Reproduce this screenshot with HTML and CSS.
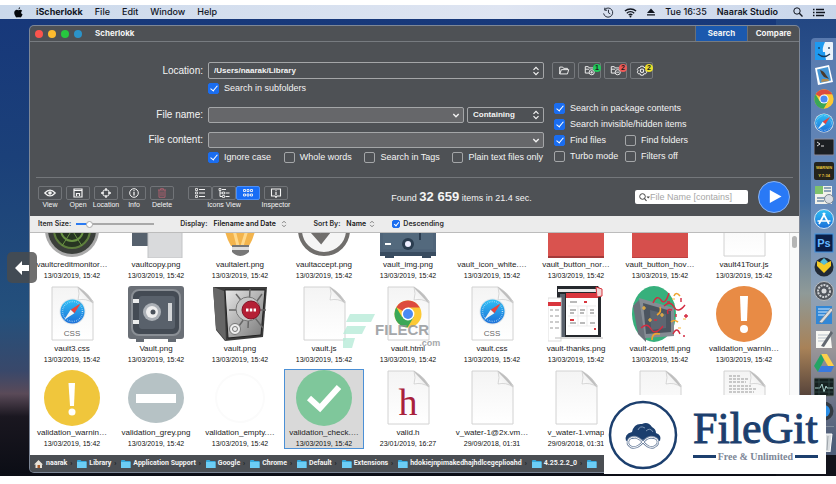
FILE: index.html
```html
<!DOCTYPE html>
<html lang="en">
<head>
<meta charset="utf-8">
<title>Scherlokk</title>
<link rel="stylesheet" href="styles.css">
</head>
<body>
<svg class="defs" aria-hidden="true">
  <defs>
    <linearGradient id="paper" x1="0" y1="0" x2="0" y2="1"><stop offset="0" stop-color="#f4f4f4"/><stop offset="1" stop-color="#fff"/></linearGradient>
    <linearGradient id="fold" x1="0" y1="1" x2="1" y2="0"><stop offset="0" stop-color="#fff"/><stop offset=".45" stop-color="#f2f2f2"/><stop offset=".5" stop-color="#bbb"/><stop offset="1" stop-color="#eee"/></linearGradient>
    <linearGradient id="steel" x1="0" y1="0" x2="1" y2="1"><stop offset="0" stop-color="#e8e8e8"/><stop offset="1" stop-color="#777"/></linearGradient>
    <linearGradient id="sky" x1="0" y1="0" x2="0" y2="1"><stop offset="0" stop-color="#2fc0f5"/><stop offset="1" stop-color="#1c6fd8"/></linearGradient>
  </defs>
  <symbol id="doc" viewBox="0 0 56 56"><path d="M8 1H34L49 15V54H8Z" fill="url(#paper)" stroke="#d2d2d2"/><path d="M34 1Q36 8 34 14Q42 12 49 17Q46 8 34 1Z" fill="url(#fold)" stroke="#c8c8c8" stroke-width=".7"/></symbol>
  <symbol id="compass" viewBox="0 0 26 26"><circle cx="13" cy="13" r="12.5" fill="#dfe5ea"/><circle cx="13" cy="13" r="11.6" fill="url(#sky)"/><circle cx="13" cy="13" r="9.6" fill="none" stroke="#bfe2fa" stroke-width="1.4" stroke-dasharray=".5 1.3"/><path d="M21 5L14.8 14.6L11.2 11.4Z" fill="#e8443c"/><path d="M5 21L11.2 11.4L14.8 14.6Z" fill="#f4f4f4"/></symbol>
  <symbol id="chrome" viewBox="0 0 28 28"><circle cx="14" cy="14" r="13.5" fill="#fcc934"/><path d="M14 14L2.3 7.2A13.5 13.5 0 0 1 25.700 7.500H14Z" fill="#dd4b3e"/><path d="M2.300 7.200A13.500 13.500 0 0 0 13.500 27.500L19.600 17.200L14 14L8 17Z" fill="#3aa757"/><circle cx="14" cy="14" r="6.400" fill="#fff"/><circle cx="14" cy="14" r="5" fill="#4a8af4"/></symbol>
  <symbol id="folder" viewBox="0 0 10 8"><path d="M0 1Q0 0 1 0H3.500L4.500 1H9.500V8H0Z" fill="#36a9dc"/><path d="M0 2H9.500V8H0Z" fill="#6ccdf5"/></symbol>
  <symbol id="updown" viewBox="0 0 8 10"><path d="M1.500 3.800L4 1.300L6.500 3.800M1.500 6.200L4 8.700L6.500 6.200" fill="none" stroke="currentColor" stroke-width="1.200"/></symbol>
  <symbol id="down" viewBox="0 0 8 10"><path d="M1.300 4L4 6.700L6.700 4" fill="none" stroke="currentColor" stroke-width="1.400"/></symbol>
  <symbol id="folderline" viewBox="0 0 14 12"><path d="M2 10V2H5.500L6.500 3.500H11V5M2 10L4 5H12.500L11 10Z" fill="none" stroke="currentColor" stroke-width="1.100"/></symbol>
</svg>

<header class="menubar">
  <nav class="menus" aria-label="Application menu">
    <svg class="apple" viewBox="0 0 10 12"><path d="M6.800 0Q7 1.800 5 2.700Q4.800 .8 6.800 0ZM5 3.500Q7.500 2.200 9 4Q6.500 6 9.500 8.300Q8 12 6.300 11.300Q5 10.800 3.800 11.300Q2 12 .7 8.300Q-.5 4.200 2.200 3.200Q3.500 2.900 5 3.500Z" fill="#05080c"/></svg>
    <a class="app" href="#">iScherlokk</a><a href="#">File</a><a href="#">Edit</a><a href="#">Window</a><a href="#">Help</a>
  </nav>
  <div class="status">
    <svg class="s12" viewBox="0 0 12 12"><path d="M2.200 3A5 5 0 1 1 1.200 7M2.500 .8V3.500H5M6.500 3V6.300L8.500 7.500" fill="none" stroke="#1a2230"/></svg>
    <svg class="s13" viewBox="0 0 14 11"><path d="M1 4A9 9 0 0 1 13 4M3 6.200A6 6 0 0 1 11 6.200M5 8.300A3 3 0 0 1 9 8.300" fill="none" stroke="#10151f" stroke-width="1.400"/><circle cx="7" cy="9.800" r="1" fill="#10151f"/></svg>
    <svg class="s8" viewBox="0 0 8 8"><path d="M0 5L4 .5L8 5ZM0 6.200H8V7.500H0Z" fill="#10151f"/></svg>
    <span>Tue 16:35</span><strong>Naarak Studio</strong>
    <svg class="s10" viewBox="0 0 10 10"><circle cx="4" cy="4" r="3.200" fill="none" stroke="#10151f"/><path d="M6.300 6.300L9.500 9.500" stroke="#10151f" stroke-width="1.300"/></svg>
    <svg class="s12" viewBox="0 0 12 8"><path d="M0 1H1.500M3 1H11M0 4H1.500M3 4H12M0 7H1.500M3 7H11" stroke="#10151f" stroke-width="1.300"/></svg>
  </div>
</header>

<main class="desktop">
  <section class="window">
    <div class="titlebar">
      <i class="dot red"></i><i class="dot yellow"></i><i class="dot green"></i><i class="dot blue"></i>
      <h1>Scherlokk</h1>
      <div class="tabs"><button class="on" type="button">Search</button><button type="button">Compare</button></div>
    </div>

    <form class="criteria">
      <label class="lbl r1" for="loc">Location:</label>
      <div class="field main r1"><select id="loc"><option>/Users/naarak/Library</option></select><svg class="arrow"><use href="#updown"/></svg></div>
      <div class="folders r1">
        <button type="button" aria-label="Choose folder"><svg class="fi" viewBox="0 0 14 12"><use href="#folderline"/></svg></button>
        <button type="button" aria-label="Included folders"><svg class="fi" viewBox="0 0 14 12"><path d="M6 9H1.500V1.500H5L6 3H11V4.500M1.500 4.500H6" fill="none" stroke="currentColor" stroke-width="1.100"/><circle cx="9" cy="8" r="3" fill="none" stroke="currentColor" stroke-width="1.100"/><path d="M9 6.300V9.700M7.300 8H10.700" stroke="currentColor"/></svg><b class="badge g">1</b></button>
        <button type="button" aria-label="Excluded folders"><svg class="fi" viewBox="0 0 14 12"><path d="M6 9H1.500V1.500H5L6 3H11V4.500M1.500 4.500H6" fill="none" stroke="currentColor" stroke-width="1.100"/><circle cx="9" cy="8" r="3" fill="none" stroke="currentColor" stroke-width="1.100"/><path d="M7.300 8H10.700" stroke="currentColor"/></svg><b class="badge r">2</b></button>
        <button type="button" aria-label="Filters"><svg class="fi" viewBox="0 0 14 12"><path d="M5.500 1H8.500L9.200 2.500L11 2.500L12.500 5L11.500 6.300L12.500 8L11 10L9.200 9.800L8.500 11.500H5.500L4.800 9.800L3 10L1.500 8L2.500 6.300L1.500 5L3 2.500L4.800 2.500Z" fill="none" stroke="currentColor" stroke-width="1.100"/><circle cx="7" cy="6.200" r="2" fill="none" stroke="currentColor" stroke-width="1.200"/></svg><b class="badge y">2</b></button>
      </div>
      <label class="check sub"><input type="checkbox" checked>Search in subfolders</label>

      <label class="lbl r3" for="fname">File name:</label>
      <div class="pair r3">
        <div class="field grey"><input id="fname" type="text"><svg class="arrow"><use href="#down"/></svg></div>
        <div class="field mode"><select aria-label="Match mode"><option>Containing</option></select><svg class="arrow"><use href="#updown"/></svg></div>
      </div>
      <label class="lbl r4" for="fcont">File content:</label>
      <div class="field grey main r4"><input id="fcont" type="text"><svg class="arrow"><use href="#down"/></svg></div>
      <div class="flags">
        <label class="check"><input type="checkbox" checked>Ignore case</label>
        <label class="check"><input type="checkbox">Whole words</label>
        <label class="check"><input type="checkbox">Search in Tags</label>
        <label class="check"><input type="checkbox">Plain text files only</label>
      </div>
      <div class="scope">
        <label class="check wide"><input type="checkbox" checked>Search in package contents</label>
        <label class="check wide"><input type="checkbox" checked>Search invisible/hidden items</label>
        <label class="check"><input type="checkbox" checked>Find files</label>
        <label class="check"><input type="checkbox">Find folders</label>
        <label class="check"><input type="checkbox">Turbo mode</label>
        <label class="check"><input type="checkbox">Filters off</label>
      </div>
    </form>

    <div class="toolbar">
      <div class="tools">
        <div class="tool"><button type="button" aria-labelledby="t1"><svg viewBox="0 0 12 10"><path d="M.8 5Q6 -.8 11.200 5Q6 10.800 .8 5Z" fill="none" stroke="currentColor" stroke-width="1.200"/><circle cx="6" cy="5" r="1.800" fill="currentColor"/></svg></button><span id="t1">View</span></div>
        <div class="tool"><button type="button" aria-labelledby="t2"><svg viewBox="0 0 12 10"><path d="M2 1H10V9H2ZM2 2.500H10" fill="none" stroke="currentColor" stroke-width="1.200"/><path d="M4.500 8V5.500H7.500V8" fill="none" stroke="currentColor" stroke-width="1.200"/></svg></button><span id="t2">Open</span></div>
        <div class="tool"><button type="button" aria-labelledby="t3"><svg viewBox="0 0 12 10"><circle cx="6" cy="5" r="3.400" fill="none" stroke="currentColor"/><path d="M6 0V3M6 7V10M1 5H4M8 5H11" stroke="currentColor" stroke-width="1.300"/></svg></button><span id="t3">Location</span></div>
        <div class="tool"><button type="button" aria-labelledby="t4"><svg viewBox="0 0 12 10"><circle cx="6" cy="5" r="4.300" fill="none" stroke="currentColor"/><path d="M6 4V7.500M6 2.200V3.300" stroke="currentColor" stroke-width="1.300"/></svg></button><span id="t4">Info</span></div>
        <div class="tool del"><button type="button" aria-labelledby="t5"><svg viewBox="0 0 12 10"><path d="M2 2H10M4.500 2V.7H7.500V2M3 2V9.300H9V2M5 3.500V8M7 3.500V8" fill="none" stroke="currentColor"/></svg></button><span id="t5">Delete</span></div>
        <div class="tool views">
          <div class="seg">
            <button type="button" aria-label="List"><svg viewBox="0 0 12 10"><path d="M5 1.500H11M5 5H11M5 8.500H11" stroke="currentColor"/><path d="M1.500 .5H3.500V2.500H1.500ZM1.500 4H3.500V6H1.500ZM1.500 7.500H3.500V9.500H1.500Z" fill="none" stroke="currentColor" stroke-width=".8"/></svg></button>
            <button type="button" aria-label="Tree"><svg viewBox="0 0 12 10"><path d="M4 1.500H8M7.500 5H11.500M7.500 8.500H11.500M2 2.500V8.500H4M2 5H4" fill="none" stroke="currentColor"/><path d="M1 .5H3V2.500H1ZM4.500 4H6.500V6H4.500ZM4.500 7.500H6.500V9.500H4.500Z" fill="none" stroke="currentColor" stroke-width=".8"/></svg></button>
            <button class="on" type="button" aria-label="Icons"><svg viewBox="0 0 12 10"><path d="M1.500 1.500H3.500V3.500H1.500ZM5 1.500H7V3.500H5ZM8.500 1.500H10.500V3.500H8.500ZM1.500 6H3.500V8H1.500ZM5 6H7V8H5ZM8.500 6H10.500V8H8.500Z" fill="none" stroke="currentColor" stroke-width=".9"/></svg></button>
          </div><span>Icons View</span></div>
        <div class="tool insp"><button type="button" aria-labelledby="t6"><svg viewBox="0 0 12 10"><path d="M1.500 1H10.500V8H7L6 9.500L5 8H1.500Z" fill="none" stroke="currentColor" stroke-width="1.100"/><path d="M6 4V7M6 2.200V3.200" stroke="currentColor" stroke-width="1.200"/></svg></button><span id="t6">Inspector</span></div>
      </div>
      <p class="found">Found <strong>32 659</strong> items in 21.4 sec.</p>
      <div class="run">
        <label class="search"><svg viewBox="0 0 12 10"><circle cx="4.500" cy="4.500" r="2.800" fill="none" stroke="#444"/><path d="M6.500 6.500L8.500 9" stroke="#444" stroke-width="1.200"/><path d="M8.500 4.500H12L10.200 6.500Z" fill="#444"/></svg><input type="text" placeholder="File Name [contains]" aria-label="Filter results"></label>
        <button class="play" type="button" aria-label="Start search"><svg viewBox="0 0 32 32"><path d="M11.500 8.500L24 15.500L11.500 22.500Z" fill="#fff"/></svg></button>
      </div>
    </div>

    <div class="options">
      <label for="size">Item Size:</label><input class="slider" id="size" type="range" min="0" max="100" value="14">
      <label class="odisp" for="disp">Display:</label><span class="pick p1"><select id="disp"><option>Filename and Date</option></select><svg class="arrow"><use href="#updown"/></svg></span>
      <label class="osort" for="sort">Sort By:</label><span class="pick p2"><select id="sort"><option>Name</option></select><svg class="arrow"><use href="#updown"/></svg></span>
      <label class="check small"><input type="checkbox" checked>Descending</label>
    </div>

    <div class="results">
      <div class="grid">
        <figure><svg viewBox="0 0 56 56"><circle cx="28" cy="28" r="27" fill="#aaa"/><circle cx="28" cy="28" r="24" fill="#3b3f3b"/><circle cx="28" cy="28" r="18" fill="#273522" stroke="#5d7d3c" stroke-width="2"/><circle cx="28" cy="28" r="11" fill="none" stroke="#6b9444" stroke-width="2"/><path d="M28 28L38 44M28 28L18 44" stroke="#6b9444"/></svg><figcaption>vaultcreditmonitor…<time>13/03/2019, 15:42</time></figcaption></figure>
        <figure><svg viewBox="0 0 56 56"><path d="M4 6H36V44H4Z" fill="#56616d"/><path d="M20 20H54V56H20Z" fill="#d9dadc" stroke="#c2c4c6"/></svg><figcaption>vaultcopy.png<time>13/03/2019, 15:42</time></figcaption></figure>
        <figure><svg viewBox="0 0 56 56"><path d="M12 20A16 16 0 0 1 44 20Q44 32 37 44H19Q12 32 12 20Z" fill="#f3b44c"/><path d="M26 44L22 28M30 44L35 28" stroke="#ffd88a" stroke-width="3"/><path d="M20 43H37V50Q28 58 20 50Z" fill="#777"/><path d="M20 45H37V48H20Z" fill="#ddd"/></svg><figcaption>vaultalert.png<time>13/03/2019, 15:42</time></figcaption></figure>
        <figure><svg viewBox="0 0 56 56"><circle cx="28" cy="28" r="24" fill="#f5f5f5" stroke="#706e6c" stroke-width="4"/><path d="M17 28L25 37L40 18" fill="none" stroke="#706e6c" stroke-width="7"/></svg><figcaption>vaultaccept.png<time>13/03/2019, 15:42</time></figcaption></figure>
        <figure><svg viewBox="0 0 56 56"><path d="M0 0H56V53H0Z" fill="#4f6479"/><path d="M3 3H53V47H3Z" fill="#53697d"/><path d="M0 50H56V54H0Z" fill="#394c60"/><path d="M5 54H14V56H5ZM42 54H51V56H42Z" fill="#394c60"/><circle cx="28" cy="42" r="6" fill="#2b3d50"/><circle cx="28" cy="42" r="3" fill="#eef"/><path d="M40 25V38" stroke="#2b3d50" stroke-width="2"/><path d="M5 42H11" stroke="#fff" stroke-width="2"/></svg><figcaption>vault_img.png<time>13/03/2019, 15:42</time></figcaption></figure>
        <figure><svg viewBox="0 0 56 56"></svg><figcaption>vault_icon_white.…<time>13/03/2019, 15:42</time></figcaption></figure>
        <figure><svg viewBox="0 0 56 56"><path d="M0 0H56V56H0Z" fill="#d9534f"/><path d="M0 54H56V56H0Z" fill="#a43a3a"/></svg><figcaption>vault_button_nor…<time>13/03/2019, 15:42</time></figcaption></figure>
        <figure><svg viewBox="0 0 56 56"><path d="M0 0H56V56H0Z" fill="#d64f4c"/><path d="M0 55H56V56H0Z" fill="#bd4141"/></svg><figcaption>vault_button_hov…<time>13/03/2019, 15:42</time></figcaption></figure>
        <figure><svg viewBox="0 0 56 56"><use href="#doc"/></svg><figcaption>vault41Tour.js<time>13/03/2019, 15:42</time></figcaption></figure>

        <figure><svg viewBox="0 0 56 56"><use href="#doc"/><use href="#compass" x="15" y="12" width="27" height="27"/><text class="ext" x="28" y="50">CSS</text></svg><figcaption>vault3.css<time>13/03/2019, 15:42</time></figcaption></figure>
        <figure><svg viewBox="0 0 56 56"><rect width="56" height="53" rx="3" fill="#6a6f76"/><rect x="4" y="4" width="48" height="45" rx="7" fill="#444b54" stroke="#8a8f95" stroke-width="2"/><rect x="11" y="10" width="36" height="33" rx="3" fill="#59616b"/><path d="M8 53H16V56H8ZM40 53H48V56H40Z" fill="#666c74"/><circle cx="24" cy="26" r="9" fill="#abb0b6"/><circle cx="24" cy="26" r="6" fill="#eee"/><circle cx="25" cy="26" r="2.500" fill="#4b525b"/><path d="M42 17V35" stroke="#d4d6d8" stroke-width="4"/><path d="M5 15H11M5 36H11" stroke="#eceded" stroke-width="4"/></svg><figcaption>Vault.png<time>13/03/2019, 15:42</time></figcaption></figure>
        <figure><svg viewBox="0 0 56 56"><path d="M1 1H55L51 51L13 55L4 44Z" fill="#3b3b3b"/><path d="M1 1L12 5L14 55L4 43Z" fill="#666"/><path d="M13 4H53L49 49L16 52Z" fill="url(#steel)" stroke="#222"/><path d="M38 3L36 42M17 24H54M24 8L51 42M50 8L27 40" stroke="#666" stroke-width="1.500"/><circle cx="36" cy="23" r="12" fill="#c7c7c7" stroke="#777"/><circle cx="39" cy="24" r="9" fill="#b51f35" stroke="#811326"/><path d="M34 24H44" stroke="#fff" stroke-width="3" stroke-dasharray="2.500 1.300"/><circle cx="23" cy="43" r="5.500" fill="#eee" stroke="#777"/><circle cx="23" cy="43" r="2.500" fill="none" stroke="#777"/></svg><figcaption>vault.png<time>13/03/2019, 15:42</time></figcaption></figure>
        <figure><svg viewBox="0 0 56 56"><use href="#doc"/></svg><figcaption>vault.js<time>13/03/2019, 15:42</time></figcaption></figure>
        <figure><svg viewBox="0 0 56 56"><use href="#doc"/><use href="#chrome" x="14" y="14" width="28" height="28"/></svg><figcaption>vault.html<time>13/03/2019, 15:42</time></figcaption></figure>
        <figure><svg viewBox="0 0 56 56"><use href="#doc"/><use href="#compass" x="15" y="12" width="27" height="27"/><text class="ext" x="28" y="50">CSS</text></svg><figcaption>vault.css<time>13/03/2019, 15:42</time></figcaption></figure>
        <figure><svg viewBox="0 0 56 56"><path d="M9 0H50L53 4V51H9Z" fill="#25282d"/><path d="M12 8H17V51H12Z" fill="#59616c"/><path d="M18 7H50V49H18Z" fill="#fff"/><path d="M18 7H50V12H18Z" fill="#d9363e"/><path d="M10 3H48V6H10Z" fill="#e8e8e8"/><path d="M22 16H29M37 16H39M22 24H28M32 24H37M42 24H46M22 27H26M32 27H36M42 27H46M22 37H28M32 37H37M42 37H47M22 34H26" stroke="#777" stroke-width="1.200"/><path d="M20 20H48M20 30H48M20 40H48M30 20V40M39 20V40" stroke="#e4e4e4" stroke-width=".7"/><path d="M22 34H26M36 16H39M46 43H48" stroke="#d9363e" stroke-width="2"/><rect y="12" width="13" height="43" fill="#fff" stroke="#ddd"/><path d="M0 16H13V20H0Z" fill="#d9363e"/><path d="M2 24H5M7 24H11M2 30H5M7 30H11M2 36H5M7 36H11M2 42H5M7 42H11" stroke="#999"/><path d="M48 1L54 3V10L49 11Z" fill="#f3d6d7" stroke="#d9363e"/><path d="M7 52H55" stroke="#bbb"/></svg><figcaption>vault-thanks.png<time>13/03/2019, 15:42</time></figcaption></figure>
        <figure><svg viewBox="0 0 56 56"><ellipse cx="22" cy="28" rx="22" ry="28" fill="#37b07c"/><path d="M1 20L8 13L14 18V56L6 48Z" fill="#6a717a"/><path d="M7 12L42 22V50L13 52Z" fill="#858c94"/><path d="M11 17L39 25V46L14 48Z" fill="#4c5560"/><path d="M18 24L34 28V42L19 44Z" fill="#5d6671"/><path d="M21 17Q25 8 29 14T37 7M32 20Q38 14 42 21T53 19M9 42Q15 36 19 43T31 40M36 28Q34 22 40 24" fill="none" stroke="#d42b41" stroke-width="1.400"/><path d="M42 10Q44 5 48 10M25 29Q30 26 28 21M20 54Q20 46 28 48M39 36Q42 33 46 36" fill="none" stroke="#f0a42f" stroke-width="1.600"/><path d="M12 20V24M10 22H14M16 34H20M18 32V36M30 27V31M28 29H32M40 13H43M46 42H49M51 33H54" stroke="#f7b73c" stroke-width="1.200"/><path d="M49 12V16M52 30H56M54 28V32M44 28V31M35 16H38M41 48Q45 40 48 48M51 50H53M22 34H25" stroke="#d42b41" stroke-width="1.400" fill="none"/></svg><figcaption>vault-confetti.png<time>13/03/2019, 15:42</time></figcaption></figure>
        <figure><svg viewBox="0 0 56 56"><circle cx="28" cy="28" r="28" fill="#e88b45"/><path d="M24 10H32L31 35H25Z" fill="#fff"/><circle cx="28" cy="43" r="4" fill="#fff"/></svg><figcaption>validation_warnin…<time>13/03/2019, 15:42</time></figcaption></figure>

        <figure><svg viewBox="0 0 56 56"><circle cx="28" cy="28" r="28" fill="#f0c63c"/><path d="M24.500 13H31L30 36H26Z" fill="#fff"/><circle cx="28" cy="42" r="3.500" fill="#fff"/></svg><figcaption>validation_warnin…<time>13/03/2019, 15:42</time></figcaption></figure>
        <figure><svg viewBox="0 0 56 56"><ellipse cx="28" cy="28" rx="28" ry="25" fill="#b6c2c5"/><path d="M8 24H48V33H8Z" fill="#fff"/></svg><figcaption>validation_grey.png<time>13/03/2019, 15:42</time></figcaption></figure>
        <figure><svg viewBox="0 0 56 56"><circle cx="28" cy="28" r="24" fill="none" stroke="#fbfbfb" stroke-width="2"/></svg><figcaption>validation_empty.…<time>13/03/2019, 15:42</time></figcaption></figure>
        <figure class="selected"><svg viewBox="0 0 56 56"><circle cx="28" cy="28" r="28" fill="#7fc79b"/><path d="M13 28L24 38L43 17" fill="none" stroke="#fff" stroke-width="6"/></svg><figcaption>validation_check.…<time>13/03/2019, 15:42</time></figcaption></figure>
        <figure><svg viewBox="0 0 56 56"><use href="#doc"/><text class="hh" x="28" y="45">h</text></svg><figcaption>valid.h<time>23/01/2019, 16:27</time></figcaption></figure>
        <figure><svg viewBox="0 0 56 56"><use href="#doc"/></svg><figcaption>v_water-1@2x.vm…<time>29/09/2018, 01:31</time></figcaption></figure>
        <figure><svg viewBox="0 0 56 56"><use href="#doc"/></svg><figcaption>v_water-1.vmap<time>29/09/2018, 01:31</time></figcaption></figure>
        <figure><svg viewBox="0 0 56 56"><use href="#doc"/></svg></figure>
        <figure><svg viewBox="0 0 56 56"><use href="#doc"/><path d="M13 6H25M13 9H33M13 12H30M13 16H35M13 19H40M13 22H38" stroke="#999" stroke-dasharray="3 1"/></svg></figure>
      </div>
      <div class="track"><i></i></div>
      <div class="filecr"><svg viewBox="0 0 32 34"><path d="M7 0H32L28 8H3ZM4 12H23L19 20H0ZM0 24H12L9 34H0Z" fill="#b9ecd9"/></svg><span>FILECR<small>.com</small></span></div>
    </div>

    <nav class="path" aria-label="Path">
      <a href="#"><svg viewBox="0 0 10 8"><path d="M0 4.500L4.500 0L9 4.500H8V8H1.500V4.500Z" fill="#e9e3d8"/><path d="M3.500 5H6V8H3.500Z" fill="#a65a2a"/></svg>naarak</a>
      <a href="#"><svg><use href="#folder"/></svg>Library</a>
      <a href="#"><svg><use href="#folder"/></svg>Application Support</a>
      <a href="#"><svg><use href="#folder"/></svg>Google</a>
      <a href="#"><svg><use href="#folder"/></svg>Chrome</a>
      <a href="#"><svg><use href="#folder"/></svg>Default</a>
      <a href="#"><svg><use href="#folder"/></svg>Extensions</a>
      <a href="#"><svg><use href="#folder"/></svg>hdokiejnpimakedhajhdlcegeplioahd</a>
      <a href="#"><svg><use href="#folder"/></svg>4.25.2.2_0</a>
      <a href="#" aria-label="Folder"><svg><use href="#folder"/></svg></a>
    </nav>
  </section>

  <aside class="dock" aria-label="Dock">
    <svg viewBox="0 0 20 20"><rect x="1" y="1" width="18" height="18" rx="1" fill="#eaf3fb"/><path d="M1 1H11Q8 7 9 11H11Q11 15 12 19H1Z" fill="#1e9af0"/><path d="M5 6V8M15 6V8M4 13Q10 18 16 13" fill="none" stroke="#163a5c" stroke-width="1.300"/></svg>
    <svg viewBox="0 0 20 20"><path d="M1 3L15 0L19 17L4 20Z" fill="#fff"/><path d="M3 4.500L14 2L17 15.500L6 18Z" fill="#4596d4"/><path d="M6 5Q10 6 12 10L15 14L10 12Q7 9 6 5Z" fill="#4a3a2a"/><path d="M8 14L14 14L15 16L7 17Z" fill="#b58b4f"/></svg>
    <svg><use href="#chrome"/></svg>
    <svg><use href="#compass"/></svg>
    <svg viewBox="0 0 20 20"><rect y="2" width="20" height="16" rx="1" fill="#1c1f22" stroke="#889"/><path d="M3 5L6 7L3 9M7 9H10" fill="none" stroke="#ddd"/></svg>
    <svg viewBox="0 0 20 20"><rect y="1" width="20" height="18" rx="2" fill="#24231c"/><text class="warn" x="10" y="8">WARNIN</text><text class="warn" x="10" y="16">Y 7:34</text></svg>
    <svg viewBox="0 0 20 20"><rect x="1" y="1" width="17" height="18" fill="#f2f2ea"/><path d="M1 1H9V9H1Z" fill="#7fc26c"/><path d="M10 3H17M10 6H17M3 13H12M3 16H10" stroke="#6d8ba8" stroke-width="1.500"/><circle cx="15" cy="14" r="4.500" fill="#d8dde2" stroke="#7b8792"/></svg>
    <svg viewBox="0 0 20 20"><circle cx="10" cy="10" r="9.500" fill="url(#sky)" stroke="#cfe4f5"/><path d="M11 4L5 15M9 4L15 15M3.500 12H16.500" stroke="#fff" stroke-width="1.700"/></svg>
    <svg viewBox="0 0 20 20"><rect x="1" y="1" width="18" height="18" fill="#0b1f48" stroke="#3f91e0"/><text class="ps" x="10" y="14">Ps</text></svg>
    <svg viewBox="0 0 20 20"><circle cx="10" cy="10" r="9.500" fill="#222a35"/><path d="M3 4L10 7L17 4V9L10 16L3 9Z" fill="#f5cb27"/><path d="M10 1L14 5L10 8L6 5Z" fill="#56bdd7"/></svg>
    <svg viewBox="0 0 20 20"><circle cx="10" cy="10" r="9.500" fill="#50555c" stroke="#b9bdc2"/><circle cx="10" cy="10" r="6" fill="none" stroke="#cfd2d5" stroke-width="2" stroke-dasharray="2 1"/><circle cx="10" cy="10" r="2.500" fill="#d7d9dc"/></svg>
    <svg viewBox="0 0 20 20"><rect x="2" y="1" width="16" height="18" fill="#3287d6"/><path d="M4 4H16M4 7H14M4 10H11" stroke="#d5ebff"/><path d="M5 17L17 3L19 5L8 18Z" fill="#dedede" stroke="#777" stroke-width=".6"/></svg>
    <svg viewBox="0 0 20 20"><path d="M2 2H16L18 19H2Z" fill="#f8f8f4"/><path d="M4 6H14M4 9H14M4 12H13" stroke="#b7c1ca"/><path d="M7 17L17 2L19 4L10 18Z" fill="#626870"/></svg>
    <svg viewBox="0 0 20 20"><path d="M7 1H13L20 13H14Z" fill="#fcd04b"/><path d="M7 1L10 7L4 19L0 13Z" fill="#24a565"/><path d="M7 13H20L17 19H4Z" fill="#3979df"/></svg>
    <svg viewBox="0 0 20 20"><rect y="1" width="20" height="18" rx="1" fill="#15201f" stroke="#68706f"/><path d="M1 11H6L8 7L10 15L12 9L13 11H19" fill="none" stroke="#a9cfca"/><path d="M1 5H19M1 15H19M5 2V18M15 2V18" stroke="#36514e" stroke-width=".7"/></svg>
    <svg viewBox="0 0 20 20"><circle cx="10" cy="10" r="9.500" fill="#343a42"/><circle cx="10" cy="10" r="6" fill="#2c8fe6"/></svg>
    <hr>
    <svg viewBox="0 0 20 20"><path d="M2 2H18L16 20H4Z" fill="#d9dde0" stroke="#fff"/><path d="M6 4L7 18M10 4V18M14 4L13 18" stroke="#9ea5ab"/></svg>
  </aside>

  <button class="back" type="button" aria-label="Previous"><svg viewBox="0 0 16 16"><path d="M1 8L8 1V5H15V11H8V15Z" fill="#fff"/></svg></button>
</main>

<div class="filegit">
  <svg viewBox="0 0 70 70"><circle cx="35" cy="35" r="33" fill="#fff" stroke="#1c3f6e" stroke-width="2.500"/><path d="M18 41Q16 34 24 32Q26 23 34 24Q40 21 44 27Q48 29 48 33Q54 35 52 41Q44 36 35 40Q26 36 18 41Z" fill="#1c3f6e"/><path d="M30 30Q32 25 37 28M38 31Q42 27 45 32" fill="none" stroke="#7e96b4"/><path d="M35 42Q27 34 21 39Q18 44 23 47Q29 49 35 42Q42 34 49 39Q52 44 46 47Q41 49 35 42Z" fill="none" stroke="#6f83a0" stroke-width="2.500"/><path d="M35 42Q27 34 21 39Q18 44 23 47Q29 49 35 42Q42 34 49 39Q52 44 46 47Q41 49 35 42Z" fill="none" stroke="#fff"/></svg>
  <div class="brand"><strong>FileGit</strong><span>Free &amp; Unlimited</span></div>
</div>
</body>
</html>
```
FILE: styles.css
```css
* { box-sizing: border-box; }
body {
  margin: 0;
  padding: 5px 0 8px;
  min-height: 100vh;
  display: flex;
  flex-direction: column;
  position: relative;
  background: #fff;
  font: 10px/12px "Liberation Sans", Arial, sans-serif;
  overflow: hidden;
}
.defs { position: absolute; width: 0; height: 0; }
a { color: inherit; text-decoration: none; }
button, input, select { font: inherit; color: inherit; margin: 0; padding: 0; border: 0; background: none; appearance: none; outline: 0; }
select { flex: 1; min-width: 0; width: 100%; }
svg { display: block; flex: none; }

.menubar {
  display: flex;
  justify-content: space-between;
  align-items: center;
  height: 14px;
  padding: 0 11px 0 13px;
  background: linear-gradient(90deg, #cbd9eb, #dfe5f2 60%, #c9d6ea);
  color: #10151f;
  font: 500 9px/14px Inter, sans-serif;
}
.menus, .status { display: flex; align-items: center; gap: 12px; }
.app { font-weight: 700; }
.apple { width: 11px; height: 11px; }
.status { gap: 10px; }
.status strong { font-weight: 600; margin-right: 5px; }
.s12 { width: 12px; height: 11px; }
.s13 { width: 13px; height: 11px; }
.s8 { width: 8px; height: 8px; }
.s10 { width: 10px; height: 10px; }

.desktop {
  position: relative;
  flex: 1;
  display: flex;
  justify-content: space-between;
  gap: 12px;
  padding: 7px 0 4px 30px;
  background:
    linear-gradient(180deg, #234783 0%, #3f6a9c 40%, #8f9a98 60%, #a88258 72%, #4a3a36 84%, #12131b 92%) right / 60px 100% no-repeat,
    linear-gradient(180deg, #17387a 0%, #1b4079 30%, #24507c 65%, #39486a 77%, #5a4a58 82%, #1a1720 87%, #0b0d15 100%);
}

.window {
  flex: 1;
  min-width: 0;
  display: flex;
  flex-direction: column;
  background: #4e5155;
  color: #f4f4f4;
  border-radius: 4px;
  overflow: hidden;
  box-shadow: 0 0 0 1px #7d8797;
}
.titlebar { display: flex; align-items: center; gap: 5px; height: 16px; padding-left: 5px; border-bottom: 1px solid #777b80; }
.dot { width: 8px; height: 8px; border-radius: 50%; }
.red { background: #fb544d; }
.yellow { background: #fdbb2e; }
.green { background: #27c83f; }
.blue { background: #2b93c9; }
h1 { margin: 0 0 0 8px; font: 700 8px/15px Inter, sans-serif; }
.tabs { display: flex; align-self: stretch; margin-left: auto; }
.tabs button { width: 52px; font: 700 8px/15px Inter, sans-serif; border-left: 1px solid #6b6f74; }
.tabs .on { background: #1b59ae; }

.criteria {
  display: grid;
  grid-template-columns: 173px 1fr 244px;
  grid-template-rows: 17px 22px 16px 22px 12px;
  gap: 3px 5px;
  padding: 20px 0 14px;
  margin: 0 6px 0 0;
  align-items: center;
}
.r1 { grid-row: 1; }
.r3 { grid-row: 3; }
.r4 { grid-row: 4; align-self: end; }
.lbl { grid-column: 1; text-align: right; }
.lbl.r4 { line-height: 16px; }
.main, .pair, .sub, .flags { grid-column: 2; }
.field { display: flex; align-items: center; height: 16px; min-width: 0; border: 1px solid #a4a6a8; border-radius: 2px; padding: 0 3px 0 5px; }
.field.r1 { height: 17px; }
.field select { font: 700 8px/12px "Liberation Sans", sans-serif; }
.field input { flex: 1; min-width: 0; }
.grey { background: #66676a; }
.arrow { width: 8px; height: 10px; pointer-events: none; }
.pair { display: flex; gap: 3px; }
.pair .grey { flex: 1; }
.mode { width: 77px; }
.folders { grid-column: 3; display: flex; gap: 3px; padding-left: 3px; }
.folders button { position: relative; display: grid; place-items: center; width: 23px; height: 17px; border: 1px solid #75787c; border-radius: 2px; }
.fi { width: 12px; height: 11px; }
.badge { position: absolute; right: -1px; top: 1px; width: 8px; height: 8px; border-radius: 50%; font: 700 7px/8px "Liberation Sans", sans-serif; color: #1b1b1b; text-align: center; }
.g { background: #20c95a; }
.r { background: #ee5a58; }
.y { background: #eadf2c; }
.check { display: flex; align-items: center; gap: 5px; font-size: 9px; white-space: nowrap; }
.check input { position: relative; flex: none; width: 11px; height: 11px; border: 1px solid #a4a6a8; border-radius: 2px; }
.check input:checked { background: #1a6df0; border-color: #1a6df0; }
.check input:checked::after { content: ""; position: absolute; left: 3px; top: 0; width: 3px; height: 6px; border: solid #fff; border-width: 0 1px 1px 0; transform: rotate(40deg); }
.sub { align-self: start; }
.flags { display: flex; justify-content: space-between; padding-right: 1px; }
.scope { grid-column: 3; grid-row: 3 / 6; align-self: start; display: grid; grid-template-columns: 71px 1fr; gap: 4px 0; padding-left: 5px; margin-top: -5px; }
.wide { grid-column: 1 / 3; }

.toolbar {
  display: grid;
  grid-template-columns: auto 1fr auto;
  align-items: center;
  height: 39px;
  margin: 0 6px;
  border-top: 1px solid #74777b;
}
.tools { display: flex; gap: 4px; padding-left: 2px; }
.tool { display: flex; flex-direction: column; align-items: center; gap: 1px; width: 24px; font: 7px/8px "Liberation Sans", sans-serif; white-space: nowrap; }
.tool button { display: grid; place-items: center; width: 24px; height: 14px; border: 1px solid #717478; border-radius: 2px; }
.tool svg { width: 12px; height: 10px; }
.del svg { color: #a85f6d; }
.views { width: 72px; margin-left: 10px; }
.seg { display: flex; }
.seg .on { background: #176cf5; border-color: #4c8ff7; }
.found { margin: 0; font-size: 9px; text-align: center; }
.found strong { font-size: 13px; }
.run { display: flex; justify-content: flex-end; align-items: center; gap: 10px; padding-right: 3px; }
.search { display: flex; align-items: center; width: 113px; height: 14px; background: #fff; border-radius: 2px; padding-left: 3px; color: #222; font-size: 9px; }
.search svg { width: 12px; height: 10px; }
.search input { flex: 1; min-width: 0; }
.search input::placeholder { color: #a6a6a6; opacity: 1; }
.play { width: 32px; height: 32px; border-radius: 50%; background: #2979f6; border: 1px solid #8bb3ef; }

.options { display: flex; align-items: center; height: 17px; padding: 0 8px; background: #ececec; border-bottom: 1px solid #bcbcbc; color: #2c2c2c; font: 600 7px/10px Inter, sans-serif; white-space: nowrap; }
.slider { width: 78px; height: 8px; margin: 0 0 0 5px; background: linear-gradient(90deg, #2b7bf3 14px, #a9a9a9 14px) center / 100% 2px no-repeat; }
.slider::-webkit-slider-thumb { appearance: none; width: 7px; height: 7px; border-radius: 50%; background: #fff; border: 1px solid #aaa; }
.odisp { margin-left: 26px; }
.osort { margin-left: 26px; }
.pick { display: flex; align-items: center; margin-left: 6px; color: #161616; }
.pick .arrow { width: 6px; height: 8px; color: #777; }
.p1 { width: 74px; }
.p2 { width: 29px; }
.small { margin-left: 17px; gap: 3px; font-size: 7px; }
.small input { width: 8px; height: 8px; }
.small input:checked::after { left: 2px; width: 2px; height: 4px; }

.results { position: relative; flex: 1 0 222px; height: 222px; display: flex; align-items: flex-end; overflow: hidden; background: #fff; color: #1b1b1b; }
.grid { flex: 1; display: grid; grid-template-columns: repeat(9, minmax(0, 1fr)); grid-auto-rows: 80px; gap: 4px; padding: 0 5px 6px 2px; }
figure { margin: 0; border: 1px solid transparent; display: flex; flex-direction: column; align-items: center; }
figure > svg { width: 56px; height: 56px; }
figcaption { font: 8px/14px "Liberation Sans", sans-serif; white-space: nowrap; text-align: center; }
figcaption time { display: block; font: 7px/8px "Liberation Sans", sans-serif; color: #111; }
.selected { background: #d9d9d9; border-color: #4b90d6; }
.ext { font: 8px "Liberation Sans", sans-serif; fill: #666; text-anchor: middle; }
.hh { font: 38px "Liberation Serif", serif; fill: #a8213c; text-anchor: middle; }
.track { align-self: stretch; width: 10px; border-left: 1px solid #e8e8e8; padding: 3px 2px; background: #fafafa; }
.track i { display: block; width: 5px; height: 12px; border-radius: 3px; background: #b5b5b5; }
.filecr { position: absolute; left: 313px; top: 81px; display: flex; opacity: .8; color: #8e9296; font: 700 15px/16px "Liberation Sans", sans-serif; }
.filecr svg { width: 32px; height: 34px; }
.filecr span { display: grid; padding-top: 8px; }
.filecr small { font-size: 9px; line-height: 6px; text-align: right; margin-right: -11px; }

.path { display: flex; align-items: center; height: 17px; padding-left: 4px; font: 700 7px/17px Roboto, sans-serif; white-space: nowrap; background: #4a4e53; }
.path a { display: flex; align-items: center; gap: 2px; flex: none; }
.path a + a::before { content: "›"; width: 8px; text-align: center; color: #1d1f22; }
.path svg { width: 10px; height: 8px; }

.dock { align-self: flex-start; display: flex; flex-direction: column; align-items: center; gap: 4px; width: 25px; margin-top: 12px; padding: 3px 2px; border-radius: 4px 0 0 4px; background: rgba(140, 170, 215, .5); }
.dock svg { width: 20px; height: 20px; }
.dock hr { width: 100%; margin: 1px 0; border: 0; border-top: 1px solid #7f8b99; }
.warn { font: 700 4px "Liberation Sans", sans-serif; fill: #e6c53c; text-anchor: middle; }
.ps { font: 700 11px "Liberation Sans", sans-serif; fill: #67b8ff; text-anchor: middle; }

.back { position: absolute; left: 7px; top: 233px; display: grid; place-items: center; width: 30px; height: 31px; border-radius: 5px; background: rgba(75, 75, 75, .8); }
.back svg { width: 16px; height: 16px; }

.filegit { position: absolute; right: 10px; bottom: 10px; display: flex; align-items: center; gap: 15px; width: 222px; height: 79px; padding: 0 9px 0 4px; background: #fff; color: #1c3f6e; }
.filegit svg { width: 70px; height: 70px; }
.brand { flex: 1; font-family: "Liberation Serif", serif; }
.brand strong { display: block; font-size: 44px; line-height: 44px; font-weight: 400; -webkit-text-stroke: 1px #1c3f6e; }
.brand span { display: flex; align-items: center; gap: 2px; font-size: 10px; font-weight: 700; line-height: 12px; color: #7d8797; white-space: nowrap; }
.brand span::before, .brand span::after { content: ""; flex: 1; height: 3px; background: #1c3f6e; }
```
